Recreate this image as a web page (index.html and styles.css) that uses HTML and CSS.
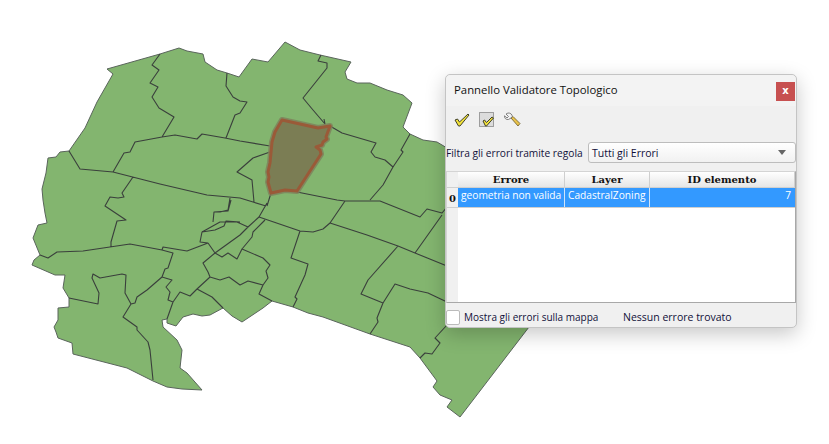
FILE: index.html
```html
<!DOCTYPE html>
<html lang="it">
<head>
<meta charset="utf-8">
<title>Pannello Validatore Topologico</title>
<link rel="stylesheet" href="styles.css">
</head>
<body>
<svg class="map" width="829" height="444" viewBox="0 0 829 444">
  <path class="land" d="M107 69L160 54L179 48L187 51L203 54L205 62L217 70L227 73L239 77L252 59L268 62L285 42L300 50L320 55L351 62L345 72L347 79L357 83L370 83L387 90L403 95L412 103L403 127L410 134L423 140L437 142L447 148L529 327L460 417L447 407L452 400L440 395L433 387L437 381L420 358L410 347L370 334L323 317L308 313L293 307L272 301L263 308L242 322L232 316L223 308L210 315L202 316L193 314L183 317L176 326L167 323L167 319L162 320L163 327L177 340L182 350L180 368L187 373L202 390L182 389L167 387L153 381L137 373L127 368L73 354L72 343L58 338L56 332L54 327L58 320L58 308L69 307L69 298L63 288L65 275L55 275L32 265L34 260L40 255L33 238L38 225L47 223L45 213L43 200L42 189L46 173L48 158L56 157L60 152L69 151L85 128L97 102L113 74Z"/>
  <path class="line" d="M160 54L152 65L159 70L150 83L158 87L152 97L159 108L174 117L162 137
  M69 151L80 169L113 172L160 184L207 195L240 198L253 202L266 206
  M113 172L124 153L130 152L135 142L162 137L175 135L197 139L202 134L225 138L240 141L270 146
  M227 73L226 86L233 97L240 101L247 102L240 113L235 115L226 138
  M133 177L122 193L124 197L118 198L110 197L105 206L126 220L117 221L111 242L111 247
  M40 255L48 258L57 252L83 251L130 244L162 250L173 253L168 268L165 269L162 277L147 290L137 297L135 303L131 304L123 317L137 327L137 330L148 342L150 350L153 380
  M69 298L98 304L99 293L92 278L93 274L100 278L122 274L126 275L125 293L131 304
  M162 277L172 280L166 287L170 292L168 300L173 302L167 319
  M173 302L180 292L190 296L197 289L212 297L223 308
  M197 289L210 277L220 280L229 277L240 285L248 281L263 285
  M210 277L208 272L203 263L215 253L222 257L228 253L237 259L242 249
  M215 253L240 235L248 227
  M162 250L163 247L187 251L208 243L215 253
  M208 243L200 242L202 232L215 230L224 226L226 221L240 222
  M213 222L214 212L228 211L231 200
  M230 198L228 210L220 212
  M267 203L259 217L248 227L237 222L220 222L202 232
  M265 220L253 232L252 237L242 249L263 258L270 265L266 271L268 278L263 285L259 294L272 301
  M259 217L300 231L313 232L323 229L330 223L345 201
  M300 231L291 258L308 264L305 275L295 297L297 299L293 307
  M330 223L367 235L398 246L415 253L447 266
  M398 246L368 280L361 294L383 303L377 318L378 322L370 334
  M383 303L395 284L410 289L428 293L447 302
  M415 253L442 215
  M297 192L337 200L345 201L380 201L420 217L427 209L442 213L447 207
  M370 200L383 185L393 167L403 152L401 150L410 134
  M393 167L385 160L375 157L371 152L376 143L342 133L330 126
  M324 119L325 124L313 110L303 98L327 68L327 63L318 61L321 55
  M270 152L253 158L237 172L252 180L254 202
  M271 193L267 206
  M447 325L435 338L440 343L432 354L425 353L420 358"/>
  <path class="zone-halo" d="M282 120L318 128L330 126L326 137L327 139L323 142L322 145L316 147L320 150L321 154L297 191L285 190L271 193L268 182L269 177L268 172L270 163L272 142L275 132Z"/>
  <path class="zone" d="M282 120L318 128L330 126L326 137L327 139L323 142L322 145L316 147L320 150L321 154L297 191L285 190L271 193L268 182L269 177L268 172L270 163L272 142L275 132Z"/>
</svg>

<section class="panel">
  <header class="title-bar">
    <h1 class="title">Pannello Validatore Topologico</h1>
    <span class="close">x</span>
  </header>
  <div class="toolbar">
    <svg class="tool" width="18" height="18" viewBox="0 0 18 18">
      <path class="check" d="M2 9L4.5 8L6.5 11L15 3L16 4L7 15L5.5 15Z"/>
    </svg>
    <svg class="tool" width="18" height="18" viewBox="0 0 18 18">
      <rect class="dotted" x="1.5" y="1.5" width="14" height="14"/>
      <path class="check" d="M5 10L6.5 9L8.5 11.5L14 6L15.5 7L8.5 15L7.5 15Z"/>
    </svg>
    <svg class="tool" width="18" height="18" viewBox="0 0 18 18">
      <path class="wrench-grip" d="M8 7L10 5.5L17 12.5L15 15Z"/>
      <path class="wrench-head" d="M5 2L3 3L5.5 5.5L4 7L1.5 4.8C1.2 7 3 9 5.5 8.5L8 7L9.3 5.5C9.3 3.5 7.5 1.8 5 2Z"/>
    </svg>
  </div>
  <div class="filter">
    <span class="filter-label">Filtra gli errori tramite regola</span>
    <div class="combo"><span>Tutti gli Errori</span><i class="arrow"></i></div>
  </div>
  <div class="table">
    <div class="row head">
      <div class="corner"></div>
      <div class="cell c1">Errore</div>
      <div class="cell c2">Layer</div>
      <div class="cell c3">ID elemento</div>
    </div>
    <div class="row selected">
      <div class="corner num">0</div>
      <div class="cell c1">geometria non valida</div>
      <div class="cell c2">CadastralZoning</div>
      <div class="cell c3">7</div>
    </div>
    <div class="rest"><div class="gutter"></div></div>
  </div>
  <footer class="foot">
    <span class="box"></span>
    <span class="show">Mostra gli errori sulla mappa</span>
    <span class="status">Nessun errore trovato</span>
  </footer>
</section>
</body>
</html>
```
FILE: styles.css
```css
* { box-sizing: border-box; }
html, body { margin: 0; padding: 0; }
body {
  position: relative;
  width: 829px;
  height: 444px;
  overflow: hidden;
  background: #fff;
  font-family: "Open Sans", "Noto Sans", sans-serif;
  font-size: 11px;
  color: #10103a;
}
.map { position: absolute; left: 0; top: 0; display: block; }
.land { fill: #83b56f; stroke: #5a655c; stroke-width: 1; stroke-linejoin: round; }
.line { fill: none; stroke: #3a3f3c; stroke-width: 1.1; stroke-linejoin: round; }
.zone-halo { fill: #7a7f55; stroke: #7f7f5c; stroke-width: 6; stroke-linejoin: round; opacity: .8; }
.zone { fill: #7b7d54; stroke: #9a5a38; stroke-width: 3; stroke-linejoin: round; }

.panel {
  position: absolute;
  left: 445px;
  top: 74px;
  width: 352px;
  height: 254px;
  display: flex;
  flex-direction: column;
  background: #f0f0f0;
  border: 1px solid #c4c4c4;
  border-radius: 5px;
  box-shadow: 0 6px 20px rgba(0, 0, 0, .22);
}
.title-bar {
  flex: none;
  height: 31px;
  padding: 4px 1px 0 8px;
  display: flex;
  align-items: flex-start;
  justify-content: space-between;
  background: #f3f3f3;
  border-radius: 5px 5px 0 0;
}
.title { margin: 3px 0 0; font-size: 11.35px; font-weight: 400; line-height: 16px; color: #111; }
.close {
  width: 19px;
  height: 19px;
  margin-top: 3px;
  background: #c75050;
  color: #fff;
  font: bold 10px/17px "DejaVu Sans", sans-serif;
  text-align: center;
}
.toolbar { flex: none; height: 36px; padding: 5px 0 0 7px; display: flex; align-items: flex-start; gap: 7px; }
.tool { display: block; }
.check { fill: #f2e23a; stroke: #3f3f28; stroke-width: 1; stroke-linejoin: round; }
.dotted { fill: #dcdcdc; stroke: #555; stroke-width: 1; stroke-dasharray: 1 1; }
.wrench-grip { fill: #e9c24a; stroke: #6a5a2a; stroke-width: .8; }
.wrench-head { fill: #f2f2f2; stroke: #666; stroke-width: .8; }

.filter { flex: none; height: 21px; display: flex; align-items: center; }
.filter-label { width: 142px; white-space: nowrap; font-size: 10.2px; color: #10103a; }
.combo {
  width: 208px;
  height: 21px;
  padding: 0 9px 0 3px;
  display: flex;
  align-items: center;
  justify-content: space-between;
  background: linear-gradient(#fff, #f1f1f1);
  border: 1px solid #bdbdbd;
  border-radius: 3px;
  font-size: 10.5px;
}
.arrow { width: 0; height: 0; border: 4px solid transparent; border-top: 5px solid #666; border-bottom: 0; }

.table {
  flex: none;
  margin-top: 8px;
  width: 350px;
  height: 132px;
  display: flex;
  flex-direction: column;
  background: #fff;
  border: 1px solid #d4d4d4;
  border-right: 1px solid #a8a8a8;
  border-bottom: 1px solid #a8a8a8;
}
.row { flex: none; display: flex; }
.head { height: 16px; background: linear-gradient(#fff, #e6e6e6); font: bold 10px/16px "DejaVu Serif", serif; color: #111; text-align: center; border-bottom: 1px solid #d0d0d0; }
.head .cell { border-right: 1px solid #cfcfcf; }
.selected { height: 20px; background: #3399ff; color: #fff; font-size: 10.2px; line-height: 15px; border-bottom: 1px solid #cfcfcf; }
.selected .cell { padding: 0 3px; border-right: 1px solid #cfe4fa; white-space: nowrap; }
.corner { width: 11px; flex: none; background: #f0f0f0; }
.num { color: #111; font: bold 10px/22px "DejaVu Serif", serif; text-align: center; }
.c1 { width: 107px; flex: none; }
.c2 { width: 85px; flex: none; }
.c3 { flex: 1; }
.selected .c3 { text-align: right; padding-right: 4px; border-right: 0; }
.rest { flex: 1; display: flex; }
.gutter { width: 11px; background: #f0f0f0; }

.foot { flex: 1; display: flex; align-items: center; font-size: 10.5px; padding-top: 4px; }
.box { width: 14px; height: 15px; background: #fff; border: 1px solid #bbb; border-radius: 2px; }
.show { margin-left: 4px; width: 159px; white-space: nowrap; font-size: 10px; }
.status { white-space: nowrap; }
```
